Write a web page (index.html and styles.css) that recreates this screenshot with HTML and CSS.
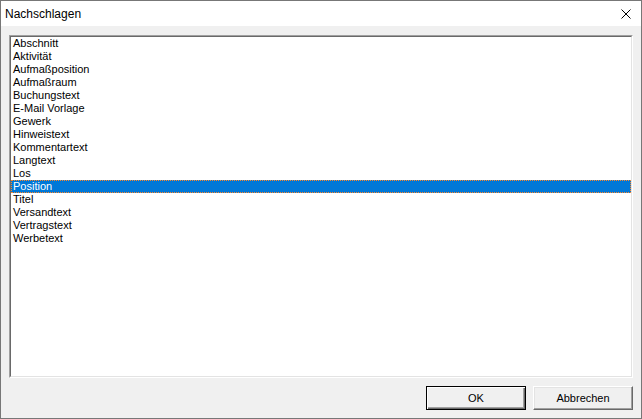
FILE: index.html
```html
<!DOCTYPE html>
<html lang="de">
<head>
<meta charset="utf-8">
<title>Nachschlagen</title>
<link rel="stylesheet" href="styles.css">
</head>
<body>
<div class="window">
  <div class="titlebar">
    <span class="title">Nachschlagen</span>
    <svg class="close" width="10" height="10" viewBox="0 0 10 10" aria-label="Schließen">
      <path d="M0.5 0.5 L9.5 9.5 M9.5 0.5 L0.5 9.5" stroke="#000" stroke-width="1" fill="none"/>
    </svg>
  </div>
  <div class="body">
    <div class="listbox">
      <ul class="list">
        <li>Abschnitt</li>
        <li>Aktivität</li>
        <li>Aufmaßposition</li>
        <li>Aufmaßraum</li>
        <li>Buchungstext</li>
        <li>E-Mail Vorlage</li>
        <li>Gewerk</li>
        <li>Hinweistext</li>
        <li>Kommentartext</li>
        <li>Langtext</li>
        <li>Los</li>
        <li class="selected">Position</li>
        <li>Titel</li>
        <li>Versandtext</li>
        <li>Vertragstext</li>
        <li>Werbetext</li>
      </ul>
    </div>
    <div class="buttons">
      <button class="btn default">OK</button>
      <button class="btn">Abbrechen</button>
    </div>
  </div>
</div>
</body>
</html>
```

FILE: styles.css
```css
html, body {
  margin: 0;
  padding: 0;
  background: #f0f0f0;
}

.window {
  width: 642px;
  height: 419px;
  box-sizing: border-box;
  border: 1px solid #777777;
  background: #f0f0f0;
  display: flex;
  flex-direction: column;
  font-family: "Liberation Sans", Arial, sans-serif;
}

.titlebar {
  height: 25px;
  flex: none;
  background: #ffffff;
  display: flex;
  align-items: center;
  justify-content: space-between;
  padding: 0 10px 0 4px;
}

.title {
  font-size: 12px;
  color: #000;
}

.close {
  display: block;
}

.body {
  flex: 1;
  display: flex;
  flex-direction: column;
  padding: 9px 8px 8px 8px;
  gap: 8px;
  min-height: 0;
}

.listbox {
  height: 343px;
  box-sizing: border-box;
  border: 1px solid;
  border-color: #a0a0a0 #ffffff #ffffff #a0a0a0;
  flex: none;
}

.list {
  list-style: none;
  margin: 0;
  padding: 0;
  height: 100%;
  box-sizing: border-box;
  border: 1px solid;
  border-color: #696969 #e3e3e3 #e3e3e3 #696969;
  background: #ffffff;
  font-size: 11px;
  color: #000;
}

.list li {
  height: 13px;
  line-height: 13px;
  padding-left: 2px;
  white-space: nowrap;
}

.list li.selected {
  background: #0078d7;
  color: #ffffff;
  outline: 1px dotted #ff8728;
  outline-offset: -1px;
}

.buttons {
  display: flex;
  justify-content: flex-end;
  gap: 7px;
  height: 24px;
  flex: none;
}

.btn {
  width: 100px;
  height: 24px;
  box-sizing: border-box;
  margin: 0;
  padding: 0;
  background: #f0f0f0;
  font-family: "Liberation Sans", Arial, sans-serif;
  font-size: 11px;
  color: #000;
  border: 1px solid;
  border-color: #ffffff #696969 #696969 #ffffff;
  box-shadow: inset -1px -1px 0 #a0a0a0, inset 1px 1px 0 #e3e3e3;
  border-radius: 0;
}

.btn.default {
  border: 1px solid #000000;
  box-shadow: inset 1px 1px 0 #ffffff, inset -1px -1px 0 #696969, inset -2px -2px 0 #a0a0a0;
}
```
